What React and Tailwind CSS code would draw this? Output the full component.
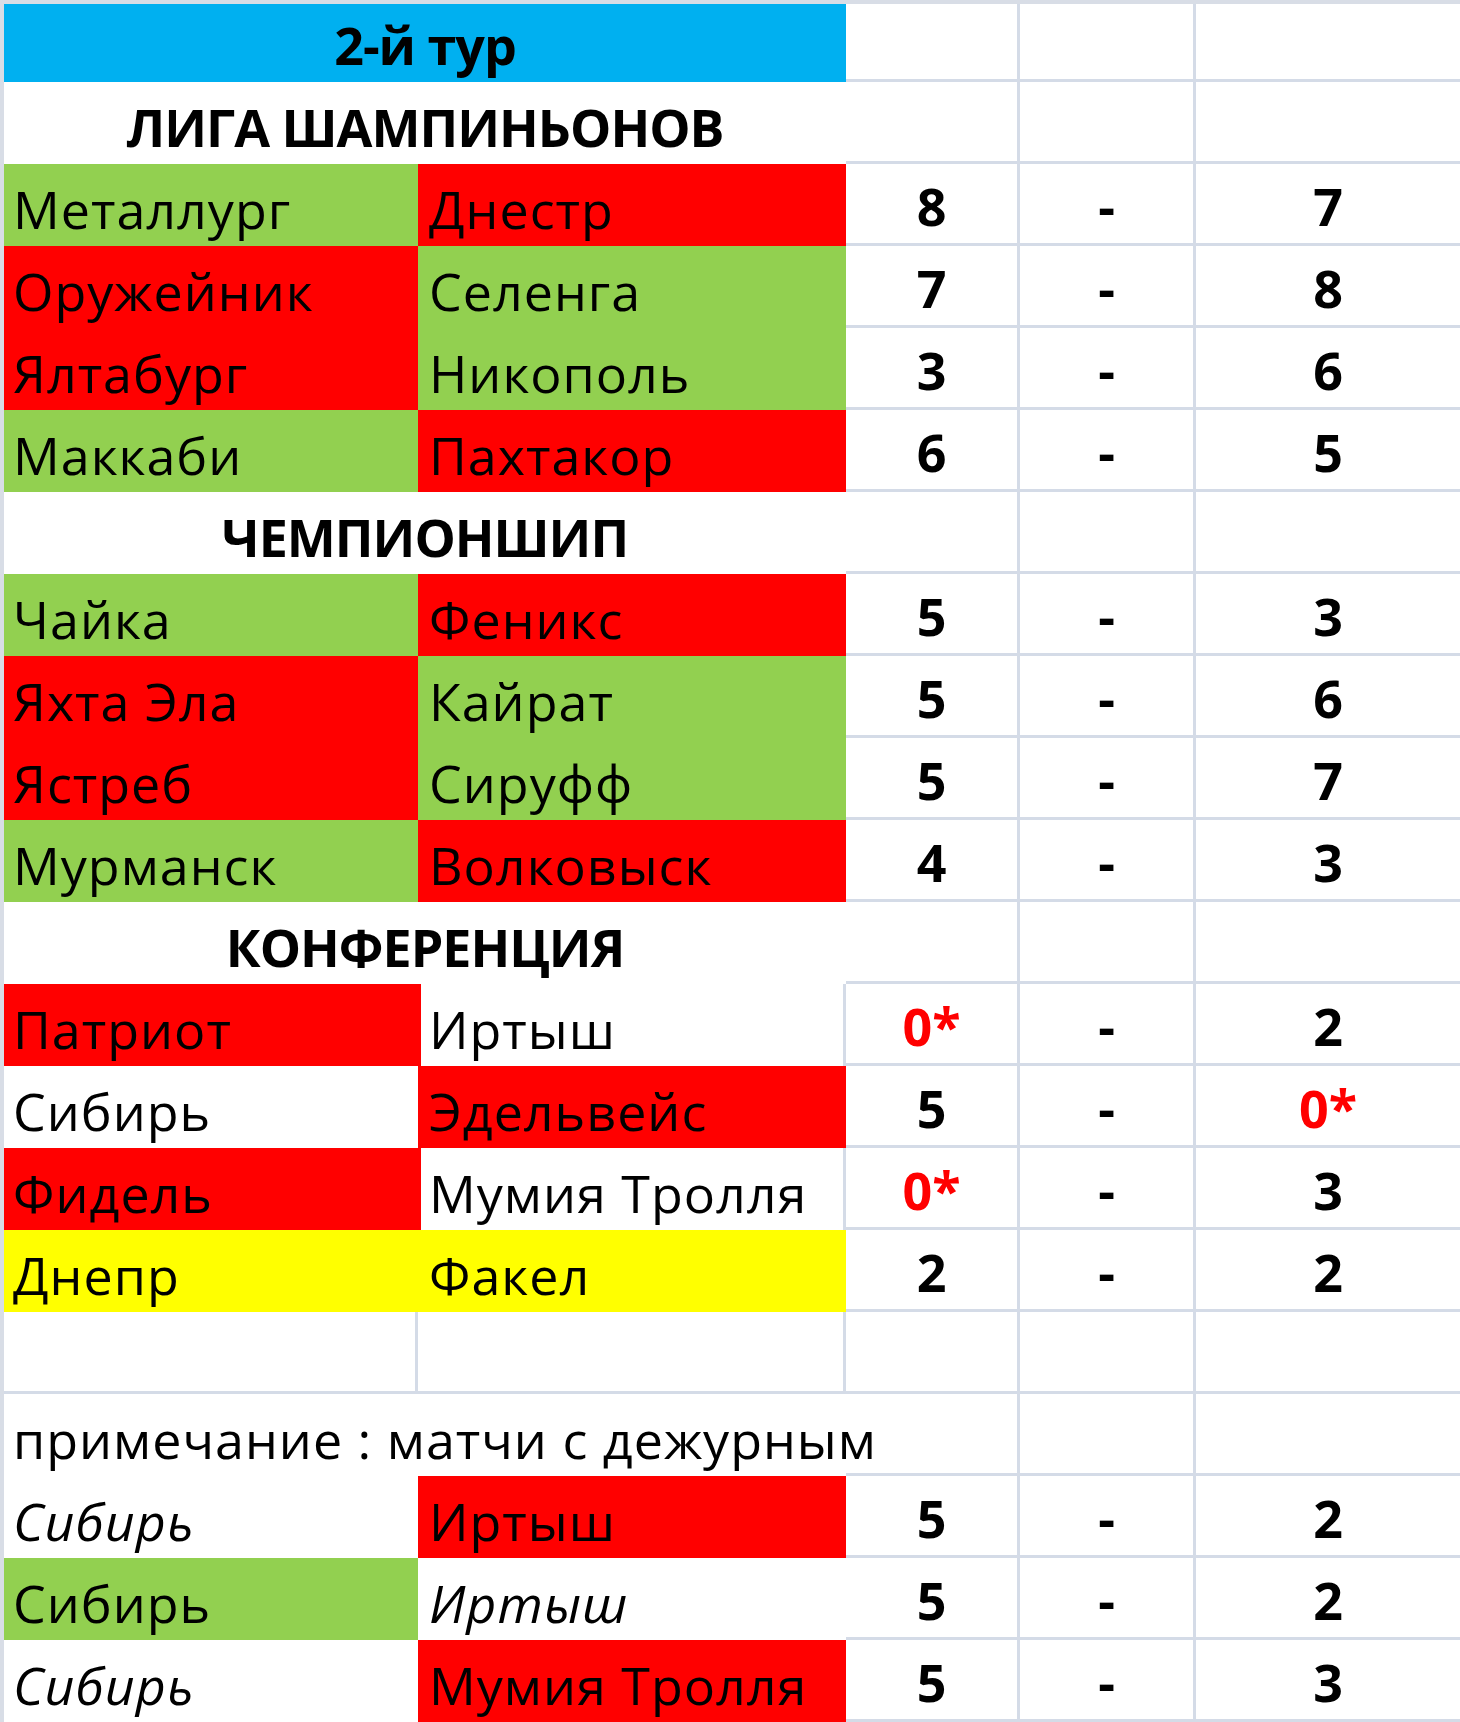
import React from 'react';

const line = 'border-[#d4dbe7]';

// column widths (A, B, C, D, E)
const wA = 'w-[414px]';
const wB = 'w-[428px]';
const wC = 'w-[174px]';
const wD = 'w-[176px]';
const wE = 'w-[264px]';

const bgs = {
  g: 'bg-[#92d050]',
  r: 'bg-[#ff0000]',
  y: 'bg-[#ffff00]',
  w: '',
};

const sections = [
  {
    title: 'ЛИГА ШАМПИНЬОНОВ',
    matches: [
      ['Металлург', 'g', 'Днестр', 'r', '8', '7'],
      ['Оружейник', 'r', 'Селенга', 'g', '7', '8'],
      ['Ялтабург', 'r', 'Никополь', 'g', '3', '6'],
      ['Маккаби', 'g', 'Пахтакор', 'r', '6', '5'],
    ],
  },
  {
    title: 'ЧЕМПИОНШИП',
    matches: [
      ['Чайка', 'g', 'Феникс', 'r', '5', '3'],
      ['Яхта Эла', 'r', 'Кайрат', 'g', '5', '6'],
      ['Ястреб', 'r', 'Сируфф', 'g', '5', '7'],
      ['Мурманск', 'g', 'Волковыск', 'r', '4', '3'],
    ],
  },
  {
    title: 'КОНФЕРЕНЦИЯ',
    matches: [
      ['Патриот', 'r', 'Иртыш', 'w', '0*', '2', { lineBC: true, wideA: true }],
      ['Сибирь', 'w', 'Эдельвейс', 'r', '5', '0*'],
      ['Фидель', 'r', 'Мумия Тролля', 'w', '0*', '3', { lineBC: true, wideA: true }],
      ['Днепр', 'y', 'Факел', 'y', '2', '2'],
    ],
  },
];

const duty = [
  ['Сибирь', 'w', 'Иртыш', 'r', '5', '2', { itA: true }],
  ['Сибирь', 'g', 'Иртыш', 'w', '5', '2', { itB: true }],
  ['Сибирь', 'w', 'Мумия Тролля', 'r', '5', '3', { itA: true }],
];

function Score({ value }) {
  const red = value.includes('*');
  return <span className={red ? 'text-[#ff0000]' : ''}>{value}</span>;
}

function ScoreCells({ s1, s2 }) {
  return (
    <>
      <div className={`${wC} shrink-0 flex items-end justify-center pb-[11px] font-bold tracking-normal border-b-[3px] border-r-[3px] ${line}`}>
        {s1 !== undefined && <Score value={s1} />}
      </div>
      <div className={`${wD} shrink-0 flex items-end justify-center pb-[11px] font-bold tracking-normal border-b-[3px] border-r-[3px] ${line}`}>
        {s1 !== undefined && '-'}
      </div>
      <div className={`${wE} shrink-0 flex items-end justify-center pb-[11px] font-bold tracking-normal border-b-[3px] ${line}`}>
        {s2 !== undefined && <Score value={s2} />}
      </div>
    </>
  );
}

function MatchRow({ m }) {
  const [a, aBg, b, bBg, s1, s2, opt = {}] = m;
  return (
    <div className="flex h-[82px]">
      <div className={`${wA} shrink-0 flex items-end pl-[9px] pb-[11px] whitespace-nowrap ${bgs[aBg]} ${opt.itA ? 'italic' : ''}`}>
        {a}
      </div>
      <div
        className={`${wB} shrink-0 flex items-end pb-[11px] whitespace-nowrap ${bgs[bBg]} ${opt.itB ? 'italic' : ''} ${
          opt.wideA ? 'pl-[8px] border-l-[3px] border-l-[#ff0000]' : 'pl-[11px]'
        } ${opt.lineBC ? 'border-r-[3px] border-r-[#d4dbe7]' : ''}`}
      >
        {b}
      </div>
      <ScoreCells s1={s1} s2={s2} />
    </div>
  );
}

function TitleRow({ title, blue }) {
  return (
    <div className={`flex ${blue ? 'h-[78px]' : 'h-[82px]'}`}>
      <div
        className={`w-[842px] shrink-0 flex items-end justify-center pb-[11px] font-bold tracking-[-1px] ${blue ? 'bg-[#00b0f0]' : ''}`}
      >
        {title}
      </div>
      <ScoreCells />
    </div>
  );
}

export default function App() {
  return (
    <div className="min-h-screen bg-[#d8dde6] pt-[4px] pl-[4px]">
      <div className="bg-white text-black text-[52px] leading-none tracking-[1px] font-['Open_Sans','Noto_Sans',sans-serif] overflow-hidden h-[1718px]">
        <TitleRow title="2-й тур" blue />
        {sections.map((s) => (
          <React.Fragment key={s.title}>
            <TitleRow title={s.title} />
            {s.matches.map((m, i) => (
              <MatchRow key={i} m={m} />
            ))}
          </React.Fragment>
        ))}

        {/* empty row */}
        <div className="flex h-[82px]">
          <div className={`${wA} shrink-0 border-b-[3px] border-r-[3px] ${line}`} />
          <div className={`${wB} shrink-0 border-b-[3px] border-r-[3px] ${line}`} />
          <ScoreCells />
        </div>

        {/* note row, text runs over into the next cells */}
        <div className="flex h-[82px]">
          <div className={`${wA} shrink-0 flex items-end pl-[9px] pb-[11px] whitespace-nowrap overflow-visible`}>
            примечание : матчи с дежурным
          </div>
          <div className={`${wB} shrink-0`} />
          <ScoreCells />
        </div>

        {duty.map((m, i) => (
          <MatchRow key={i} m={m} />
        ))}
      </div>
    </div>
  );
}
